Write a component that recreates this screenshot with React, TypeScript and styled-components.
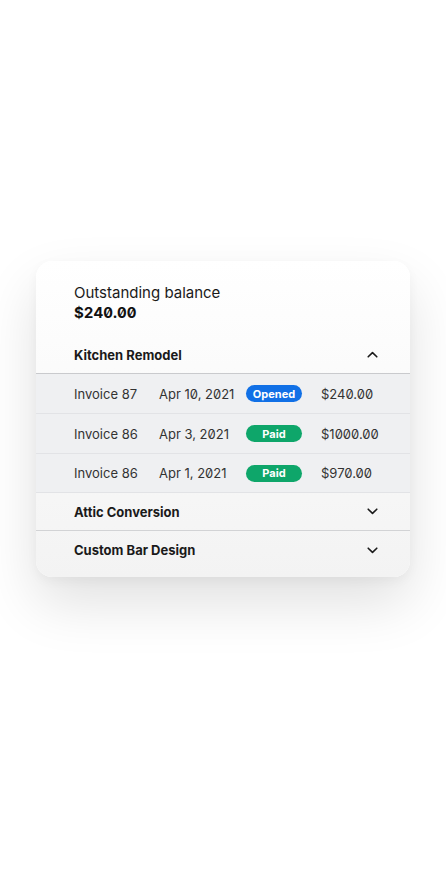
import React from "react";
import styled, { createGlobalStyle } from "styled-components";

const GlobalStyle = createGlobalStyle`
  html, body {
    margin: 0;
    padding: 0;
    background: #ffffff;
    font-family: Inter, "Liberation Sans", sans-serif;
    -webkit-font-smoothing: antialiased;
  }
`;

type Invoice = {
  name: string;
  date: string;
  status: "Opened" | "Paid";
  amount: string;
};

const invoices: Invoice[] = [
  { name: "Invoice 87", date: "Apr 10, 2021", status: "Opened", amount: "$240.00" },
  { name: "Invoice 86", date: "Apr 3, 2021", status: "Paid", amount: "$1000.00" },
  { name: "Invoice 86", date: "Apr 1, 2021", status: "Paid", amount: "$970.00" },
];

const Chevron = ({ up }: { up?: boolean }) => (
  <svg width="11" height="7" viewBox="0 0 11 7" fill="none">
    <path
      d={up ? "M1.2 5.8L5.5 1.6L9.8 5.8" : "M1.2 1.2L5.5 5.4L9.8 1.2"}
      stroke="#1a1a1a"
      strokeWidth="1.6"
      strokeLinecap="round"
      strokeLinejoin="round"
    />
  </svg>
);

const App = () => {
  return (
    <Page>
      <GlobalStyle />
      <Card>
        <Balance>
          <BalanceLabel>Outstanding balance</BalanceLabel>
          <BalanceValue>$240.00</BalanceValue>
        </Balance>

        <ProjectHeader $open>
          <ProjectName>Kitchen Remodel</ProjectName>
          <Chevron up />
        </ProjectHeader>
        <Rows>
          {invoices.map((inv, i) => (
            <Row key={i}>
              <Cell>{inv.name}</Cell>
              <Cell>{inv.date}</Cell>
              <BadgeCell>
                <Badge $status={inv.status}>{inv.status}</Badge>
              </BadgeCell>
              <Cell>{inv.amount}</Cell>
            </Row>
          ))}
        </Rows>

        <ProjectHeader $open={false}>
          <ProjectName>Attic Conversion</ProjectName>
          <Chevron />
        </ProjectHeader>
        <ProjectHeader $open={false} $last>
          <ProjectName>Custom Bar Design</ProjectName>
          <Chevron />
        </ProjectHeader>
      </Card>
    </Page>
  );
};

const Page = styled.div`
  min-height: 872px;
  padding-top: 261px;
  box-sizing: border-box;
  display: flex;
  justify-content: center;
  align-items: flex-start;
`;

const Card = styled.div`
  width: 374px;
  border-radius: 16px;
  background: linear-gradient(180deg, #ffffff 0%, #f3f3f3 100%);
  box-shadow: 0 26px 56px rgba(0, 0, 0, 0.12), 0 4px 12px rgba(0, 0, 0, 0.04);
  padding-bottom: 8px;
  overflow: hidden;
`;

const Balance = styled.div`
  padding: 21px 38px 13px;
  display: flex;
  flex-direction: column;
`;

const BalanceLabel = styled.div`
  font-size: 15px;
  line-height: 21px;
  color: #1a1a1a;
`;

const BalanceValue = styled.div`
  font-size: 15px;
  line-height: 20px;
  font-weight: 700;
  color: #111;
  font-feature-settings: "zero" 1, "tnum" 1;
`;

const ProjectHeader = styled.div<{ $open: boolean; $last?: boolean }>`
  height: 38px;
  padding: 0 32px 0 38px;
  display: flex;
  align-items: center;
  justify-content: space-between;
  box-sizing: border-box;
  border-bottom: ${(p) => (p.$last ? "none" : p.$open ? "1px solid #c9cacd" : "1px solid #d2d3d5")};
`;

const ProjectName = styled.div`
  font-size: 13px;
  font-weight: 700;
  color: #1a1a1a;
`;

const Rows = styled.div`
  background: #eff0f2;
`;

const Row = styled.div`
  height: 40px;
  box-sizing: border-box;
  border-bottom: 1px solid #e2e3e6;
  padding-left: 38px;
  display: grid;
  grid-template-columns: 85px 87px 75px 1fr;
  align-items: center;

  &:last-child {
    height: 39px;
  }
`;

const Cell = styled.div`
  font-size: 13px;
  color: #333;
  font-feature-settings: "zero" 1;
`;

const BadgeCell = styled.div`
  display: flex;
  align-items: center;
`;

const Badge = styled.span<{ $status: "Opened" | "Paid" }>`
  width: 56px;
  height: 17px;
  border-radius: 9px;
  background: ${(p) => (p.$status === "Opened" ? "#1170e6" : "#0ea66a")};
  color: #fff;
  font-size: 11px;
  font-weight: 700;
  display: flex;
  align-items: center;
  justify-content: center;
`;

export default App;
